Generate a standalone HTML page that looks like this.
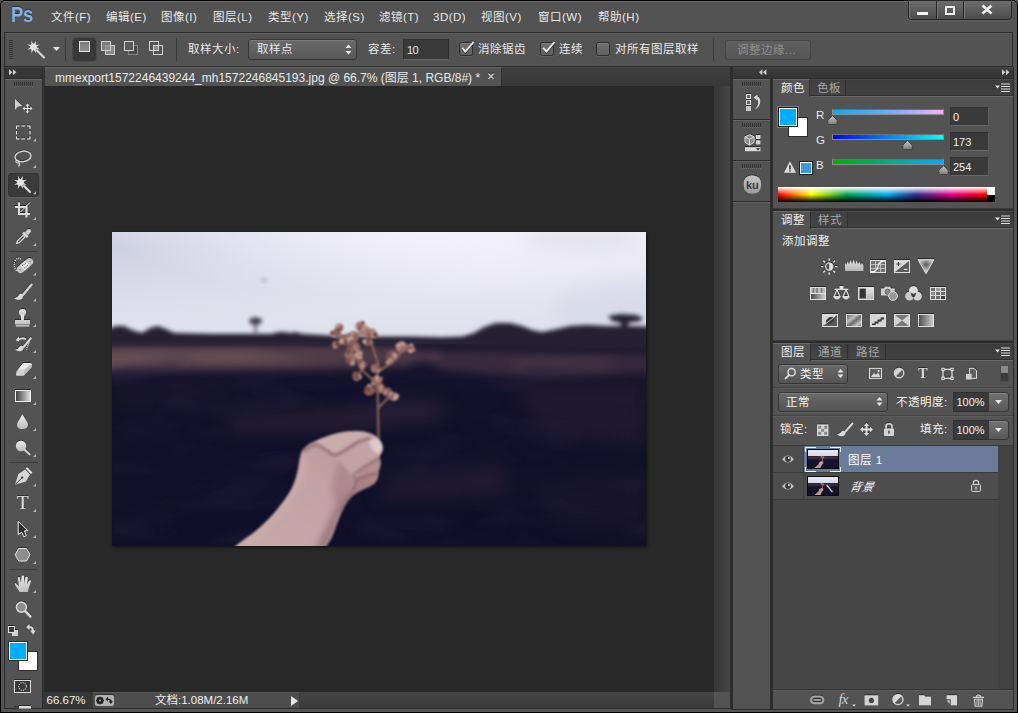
<!DOCTYPE html>
<html lang="zh-CN">
<head>
<meta charset="utf-8">
<title>Photoshop</title>
<style>
html,body{margin:0;padding:0;}
body{width:1018px;height:713px;overflow:hidden;background:#535353;font-family:"Liberation Sans","Noto Sans CJK SC",sans-serif;font-size:12px;color:#e6e6e6;}
#app{position:relative;width:1018px;height:713px;overflow:hidden;background:#565656;}
#app div,#app span,#app svg{position:absolute;box-sizing:border-box;}
.t{white-space:nowrap;line-height:16px;height:16px;color:#e8e8e8;font-size:11.5px;letter-spacing:.5px;margin-top:-.5px;}
.tabrow{background:linear-gradient(#3b3b3b,#424242);border-top:1px solid #4a4a4a;border-bottom:1px solid #303030;}
.tabhl{height:1px;background:#686868;}
.tabA{background:#535353;border-top:1px solid #6a6a6a;border-right:1px solid #303030;}
.tabI{border-right:1px solid #303030;background:linear-gradient(#3f3f3f,#454545);}
.tt{font-size:11.5px;color:#ececec;}
.ti{color:#a8a8a8;}
.sl{width:112px;height:6px;border:1px solid #8e8e8e;border-top-color:#6e6e6e;}
.vb{width:39px;height:19px;background:#3a3a3a;border:1px solid #333;border-bottom-color:#686868;border-right-color:#5c5c5c;}
.vt{font-size:11px;color:#f0f0f0;letter-spacing:0;}
.pgap{width:240px;height:3px;background:#2d2d2d;border-top:1px solid #3c3c3c;}
.sel{border:1px solid #363636;border-radius:3px;background:linear-gradient(#6a6a6a,#545454);box-shadow:inset 0 1px 0 #7c7c7c,0 1px 0 #5e5e5e;}
.hsep{width:240px;height:2px;background:#444;border-bottom:1px solid #5c5c5c;}
.pin{width:36px;height:20px;background:#3a3a3a;border:1px solid #303030;border-right:none;}
.pbtn{width:21px;height:20px;background:linear-gradient(#727272,#585858);border:1px solid #363636;border-radius:0 3px 3px 0;box-shadow:inset 0 1px 0 #848484;}

</style>
</head>
<body>
<div id="app">
<!-- window frame -->
<div style="left:0;top:0;width:1018px;height:713px;background:#000;border-radius:5px 5px 0 0;"></div>
<div style="left:1px;top:1px;width:1016px;height:711px;background:#545454;border-radius:4px 4px 0 0;border-top:1px solid #6c6c6c;"></div>
<!-- menubar -->
<div id="menubar" style="left:2px;top:2px;width:1014px;height:30px;background:#535353;border-radius:3px 3px 0 0;">
  <span style="left:9px;top:0px;font-size:22px;font-weight:bold;color:#82b1e2;line-height:26px;letter-spacing:-0.3px;transform:scale(0.84,1.03);transform-origin:0 50%;text-shadow:0 -1px 0 rgba(20,20,20,.55);">Ps</span>
  <span class="t" style="left:49px;top:7px;">文件(F)</span>
  <span class="t" style="left:104px;top:7px;">编辑(E)</span>
  <span class="t" style="left:159px;top:7px;">图像(I)</span>
  <span class="t" style="left:211px;top:7px;">图层(L)</span>
  <span class="t" style="left:266px;top:7px;">类型(Y)</span>
  <span class="t" style="left:322px;top:7px;">选择(S)</span>
  <span class="t" style="left:377px;top:7px;">滤镜(T)</span>
  <span class="t" style="left:431px;top:7px;">3D(D)</span>
  <span class="t" style="left:479px;top:7px;">视图(V)</span>
  <span class="t" style="left:536px;top:7px;">窗口(W)</span>
  <span class="t" style="left:596px;top:7px;">帮助(H)</span>
</div>
<!-- window buttons -->
<div style="left:908px;top:0;width:104px;height:20px;background:#262626;border-radius:0 0 4px 4px;box-shadow:0 1px 0 #606060;"></div>
<div style="left:909px;top:1px;width:27px;height:18px;background:linear-gradient(#6c6c6c,#4c4c4c);border-radius:0 0 0 3px;box-shadow:inset 1px 0 0 #777;"></div>
<div style="left:937px;top:1px;width:26px;height:18px;background:linear-gradient(#6c6c6c,#4c4c4c);box-shadow:inset 1px 0 0 #777;"></div>
<div style="left:964px;top:1px;width:47px;height:18px;background:linear-gradient(#6c6c6c,#4c4c4c);border-radius:0 0 3px 0;box-shadow:inset 1px 0 0 #777;"></div>
<div style="left:917px;top:12px;width:11px;height:3px;background:#f2f2f2;"></div>
<div style="left:945px;top:6px;width:10px;height:9px;border:2px solid #f2f2f2;"></div>
<svg style="left:981px;top:4px;" width="12" height="11" viewBox="0 0 12 11"><path d="M1.5 1.5 L10.5 9.5 M10.5 1.5 L1.5 9.5" stroke="#f2f2f2" stroke-width="2.6"/></svg>
<!-- options bar -->
<div id="optbar" style="left:4px;top:32px;width:1009px;height:35px;background:#535353;border:1px solid #2c2c2c;box-shadow:inset 0 1px 0 #616161;">
</div>
<svg style="left:9px;top:40px;" width="4" height="20" viewBox="0 0 4 20"><path d="M0 0.5H4M0 2.5H4M0 4.5H4M0 6.5H4M0 8.5H4M0 10.5H4M0 12.5H4M0 14.5H4M0 16.5H4M0 18.5H4" stroke="#373737" stroke-width="1"/></svg>
<!-- magic wand icon (option bar) -->
<svg style="left:26px;top:39px;" width="20" height="20" viewBox="26 39 20 20">
  <path d="M36.2 40.7L35.5 45.1L39.9 44.4L36.3 47.0L39.9 49.6L35.5 48.9L36.2 53.3L33.6 49.7L31.0 53.3L31.7 48.9L27.3 49.6L30.9 47.0L27.3 44.4L31.7 45.1L31.0 40.7L33.6 44.3Z" fill="#e2e2e2"/>
  <circle cx="33.6" cy="47" r="3.2" fill="#e2e2e2"/>
  <path d="M37 50.4 L44 57.4" stroke="#d4d4d4" stroke-width="2.1" stroke-linecap="round"/>
</svg>
<svg style="left:53px;top:47px;" width="7" height="4" viewBox="0 0 7 4"><path d="M0 0H7L3.5 4Z" fill="#e8e8e8"/></svg>
<div style="left:65px;top:38px;width:1px;height:23px;background:#3b3b3b;"></div>
<!-- selection mode buttons -->
<div style="left:73px;top:38px;width:23px;height:23px;background:#383838;border-radius:3px;box-shadow:0 0 0 1px #4a4a4a;"></div>
<div style="left:79px;top:41px;width:11px;height:11px;border:1px solid #e0e0e0;background:linear-gradient(#7a7a7a,#909090);"></div>
<div style="left:105px;top:45px;width:10px;height:10px;border:1px solid #cfcfcf;background:#8a8a8a;"></div>
<div style="left:101px;top:41px;width:10px;height:10px;border:1px solid #cfcfcf;background:rgba(138,138,138,.75);"></div>
<div style="left:128px;top:45px;width:10px;height:10px;border:1px solid #888;background:#494949;"></div>
<div style="left:124px;top:41px;width:10px;height:10px;border:1px solid #cfcfcf;background:#5a5a5a;"></div>
<div style="left:149px;top:41px;width:10px;height:10px;border:1px solid #cfcfcf;"></div>
<div style="left:153px;top:45px;width:10px;height:10px;border:1px solid #cfcfcf;"></div>
<div style="left:154px;top:46px;width:4px;height:4px;background:#8a8a8a;"></div>
<div style="left:176px;top:38px;width:1px;height:23px;background:#3b3b3b;"></div>
<span class="t" style="left:188px;top:41px;">取样大小:</span>
<div style="left:248px;top:39px;width:109px;height:21px;border:1px solid #363636;border-radius:3px;background:linear-gradient(#6b6b6b,#575757);box-shadow:inset 0 1px 0 #7a7a7a;"></div>
<span class="t" style="left:257px;top:41px;">取样点</span>
<svg style="left:345px;top:44px;" width="7" height="11" viewBox="0 0 7 11"><path d="M0.5 4L3.5 0.5L6.5 4ZM0.5 7L3.5 10.5L6.5 7Z" fill="#e8e8e8"/></svg>
<span class="t" style="left:368px;top:41px;">容差:</span>
<div style="left:403px;top:39px;width:46px;height:21px;background:#3a3a3a;border:1px solid #2f2f2f;border-bottom-color:#666;"></div>
<span class="t" style="left:407px;top:42px;font-size:11px;letter-spacing:-.5px;">10</span>
<!-- checkboxes -->
<div style="left:459px;top:42px;width:14px;height:14px;border:1px solid #2d2d2d;border-radius:2.5px;background:linear-gradient(#6f6f6f,#616161);box-shadow:inset 0 1px 0 #7c7c7c,0 1px 0 #606060;"></div>
<svg style="left:459px;top:40px;" width="17" height="17" viewBox="0 0 17 17"><path d="M3.4 8.8L6.6 12.6L14.6 3.2" stroke="#252525" stroke-width="2" fill="none" opacity=".7"/><path d="M3.2 7.8L6.4 11.6L14.6 2" stroke="#ececec" stroke-width="1.9" fill="none"/></svg>
<span class="t" style="left:478px;top:41px;">消除锯齿</span>
<div style="left:540px;top:42px;width:14px;height:14px;border:1px solid #2d2d2d;border-radius:2.5px;background:linear-gradient(#6f6f6f,#616161);box-shadow:inset 0 1px 0 #7c7c7c,0 1px 0 #606060;"></div>
<svg style="left:540px;top:40px;" width="17" height="17" viewBox="0 0 17 17"><path d="M3.4 8.8L6.6 12.6L14.6 3.2" stroke="#252525" stroke-width="2" fill="none" opacity=".7"/><path d="M3.2 7.8L6.4 11.6L14.6 2" stroke="#ececec" stroke-width="1.9" fill="none"/></svg>
<span class="t" style="left:559px;top:41px;">连续</span>
<div style="left:596px;top:42px;width:14px;height:14px;border:1px solid #2d2d2d;border-radius:2.5px;background:linear-gradient(#6f6f6f,#616161);box-shadow:inset 0 1px 0 #7c7c7c,0 1px 0 #606060;"></div>
<span class="t" style="left:615px;top:41px;">对所有图层取样</span>
<div style="left:713px;top:38px;width:1px;height:23px;background:#3b3b3b;"></div>
<div style="left:725px;top:40px;width:86px;height:20px;border:1px solid #444;border-radius:3px;background:linear-gradient(#5f5f5f,#555);"></div>
<span class="t" style="left:737px;top:42px;color:#8f8f8f;">调整边缘...</span>
<!-- document area -->
<div style="left:42px;top:67px;width:690px;height:642px;background:#2d2d2d;"></div>
<div style="left:44px;top:67px;width:686px;height:19px;background:linear-gradient(#3f3f3f,#383838);border-left:1px solid #303030;border-top:1px solid #484848;"></div>
<div style="left:45px;top:67px;width:457px;height:19px;background:#535353;border-top:1px solid #646464;border-right:1px solid #303030;"></div>
<span class="t" style="left:55px;top:70px;color:#eaeaea;font-size:12px;letter-spacing:0;" id="tabtitle">mmexport1572246439244_mh1572246845193.jpg @ 66.7% (图层 1, RGB/8#) *</span>
<svg style="left:487px;top:71px;" width="8" height="9" viewBox="0 0 8 9"><path d="M1.4 1.6L6.6 6.8M6.6 1.6L1.4 6.8" stroke="#1e1e1e" stroke-width="1.5"/><path d="M1.4 2.6L6.6 7.8M6.6 2.6L1.4 7.8" stroke="#cdcdcd" stroke-width="1.4"/></svg>
<div id="canvas" style="left:44px;top:86px;width:670px;height:606px;background:#282828;"></div>
<div style="left:714px;top:86px;width:16px;height:606px;background:linear-gradient(90deg,#363636,#464646);"></div>
<!-- status bar -->
<div style="left:44px;top:692px;width:686px;height:17px;background:linear-gradient(#444,#3a3a3a);border-bottom:1px solid #2c2c2c;"></div>
<div style="left:44px;top:692px;width:49px;height:16px;background:#373737;"></div>
<div style="left:93px;top:692px;width:207px;height:16px;background:#4d4d4d;border-top:1px solid #565656;border-right:1px solid #3a3a3a;"></div>
<div style="left:714px;top:692px;width:16px;height:16px;background:#535353;"></div>
<span class="t" style="left:46.5px;top:692px;font-size:11.5px;letter-spacing:0;color:#f0f0f0;">66.67%</span>
<div style="left:95px;top:695px;width:19px;height:11px;background:#b2b2b2;border-radius:2px;box-shadow:0 -1px 0 #2c2c2c;"></div>
<svg style="left:95px;top:695px;" width="19" height="11" viewBox="0 0 19 11"><circle cx="5" cy="5.5" r="2.6" fill="none" stroke="#222" stroke-width="2"/><path d="M5 1.6V9.4M1.1 5.5H8.9M2.2 2.7L7.8 8.3M7.8 2.7L2.2 8.3" stroke="#222" stroke-width="1.1"/><circle cx="5" cy="5.5" r="1" fill="#b2b2b2"/><path d="M10.6 4.2L13 1.6V3.4Q16.6 3.4 16.6 6.2H18L15.8 9L13.6 6.2H15Q14.8 5 13 5V6.6Z" fill="#222"/></svg>
<span class="t" style="left:155px;top:692.5px;font-size:11.5px;letter-spacing:0;color:#f0f0f0;">文档:1.08M/2.16M</span>
<svg style="left:291px;top:696px;" width="7" height="10" viewBox="0 0 7 10"><path d="M0 0L7 5L0 10Z" fill="#e6e6e6"/></svg>
<!-- photo -->
<div style="left:112px;top:232px;width:534px;height:314px;box-shadow:1px 1px 3px rgba(0,0,0,.6);background:#100f29;"></div>
<svg id="photo" style="left:112px;top:232px;" width="534" height="314" viewBox="0 0 534 314">
  <defs>
    <linearGradient id="sky" x1="0" y1="0" x2="0" y2="1">
      <stop offset="0" stop-color="#ecebf5"/>
      <stop offset="0.5" stop-color="#e6e6f1"/>
      <stop offset="1" stop-color="#dddfec"/>
    </linearGradient>
    <radialGradient id="skyl" cx="0.0" cy="0.15" r="0.7">
      <stop offset="0" stop-color="#cbcee0" stop-opacity=".9"/>
      <stop offset="1" stop-color="#cbcee0" stop-opacity="0"/>
    </radialGradient>
    <radialGradient id="skyr" cx="0.6" cy="0.0" r="0.6">
      <stop offset="0" stop-color="#f3f1fd" stop-opacity=".95"/>
      <stop offset="1" stop-color="#f3f1fd" stop-opacity="0"/>
    </radialGradient>
    <linearGradient id="field" x1="0" y1="0" x2="0" y2="1">
      <stop offset="0" stop-color="#1a1630"/>
      <stop offset="0.25" stop-color="#12112b"/>
      <stop offset="1" stop-color="#0f0f29"/>
    </linearGradient>
    <linearGradient id="skin" x1="0" y1="1" x2="1" y2="0">
      <stop offset="0" stop-color="#c9aaa9"/>
      <stop offset="0.55" stop-color="#c3a2a3"/>
      <stop offset="1" stop-color="#b9979a"/>
    </linearGradient>
    <filter id="b1" color-interpolation-filters="sRGB" x="-20%" y="-20%" width="140%" height="140%"><feGaussianBlur stdDeviation="1.2"/></filter>
    <filter id="b3" color-interpolation-filters="sRGB" x="-20%" y="-80%" width="140%" height="260%"><feGaussianBlur stdDeviation="3"/></filter>
    <filter id="b5" color-interpolation-filters="sRGB" x="-20%" y="-100%" width="140%" height="300%"><feGaussianBlur stdDeviation="5"/></filter>
    <filter id="b9" color-interpolation-filters="sRGB" x="-40%" y="-150%" width="180%" height="400%"><feGaussianBlur stdDeviation="9"/></filter>
    <filter id="b05" color-interpolation-filters="sRGB" x="-10%" y="-10%" width="120%" height="120%"><feGaussianBlur stdDeviation="0.9"/></filter>
    <filter id="b07" color-interpolation-filters="sRGB" x="-10%" y="-10%" width="120%" height="120%"><feGaussianBlur stdDeviation="0.8"/></filter>
    <filter id="b2h" color-interpolation-filters="sRGB" x="-20%" y="-20%" width="140%" height="140%"><feGaussianBlur stdDeviation="2.2"/></filter>
    <filter id="tex" x="0" y="0" width="100%" height="100%" color-interpolation-filters="sRGB">
      <feTurbulence type="fractalNoise" baseFrequency="0.011 0.032" numOctaves="4" seed="11" result="n"/>
      <feColorMatrix in="n" type="matrix" values="0 0 0 0 0.16  0 0 0 0 0.13  0 0 0 0 0.25  1.4 0 0 0 -0.72"/>
      <feGaussianBlur stdDeviation="1.5"/>
    </filter>
    <filter id="tex2" x="0" y="0" width="100%" height="100%" color-interpolation-filters="sRGB">
      <feTurbulence type="fractalNoise" baseFrequency="0.02 0.09" numOctaves="3" seed="4" result="n"/>
      <feColorMatrix in="n" type="matrix" values="0 0 0 0 0.16  0 0 0 0 0.12  0 0 0 0 0.2  2.6 0 0 0 -1.0"/>
      <feGaussianBlur stdDeviation="1.2"/>
    </filter>
    <linearGradient id="fade" x1="0" y1="0" x2="0" y2="1"><stop offset="0" stop-color="#fff" stop-opacity="0"/><stop offset=".12" stop-color="#fff" stop-opacity="1"/><stop offset="1" stop-color="#fff" stop-opacity="0.8"/></linearGradient>
    <mask id="fm"><rect x="0" y="112" width="534" height="202" fill="url(#fade)"/></mask>
    <clipPath id="pc"><rect x="0" y="0" width="534" height="314"/></clipPath>
    <clipPath id="hc"><path d="M119.8 319.3C120.4 318.4 119.2 317.5 123.5 313.9C127.7 310.2 138.7 303.2 145.4 297.4C152.1 291.7 158.1 285.6 163.6 279.2C169.1 272.8 174.7 265.2 178.2 259.1C181.7 253.1 182.9 248.5 184.6 242.7C186.3 236.9 187.2 228.6 188.2 224.5C189.2 220.4 189.2 220.1 190.6 218.1C192.0 216.1 193.9 214.3 196.4 212.6C198.9 211.0 201.6 209.7 205.6 208.1C209.5 206.4 215.3 204.0 220.2 202.6C225.0 201.2 229.9 200.0 234.7 199.5C239.6 198.9 244.8 198.7 249.3 199.3C253.9 199.9 258.8 201.3 262.1 203.0C265.4 204.7 267.6 207.2 269.0 209.5C270.5 211.9 271.0 214.7 270.9 217.2C270.7 219.7 268.3 222.1 267.9 224.5C267.6 226.9 268.9 229.3 268.7 231.8C268.5 234.2 267.3 236.9 266.9 239.1C266.4 241.3 266.9 242.8 266.1 244.9C265.3 247.0 264.3 249.9 262.1 251.8C259.9 253.8 256.0 255.0 253.0 256.6C249.9 258.2 246.6 259.4 243.9 261.3C241.1 263.3 238.7 265.6 236.6 268.3C234.4 270.9 232.9 273.7 231.1 277.4C229.3 281.0 227.4 285.6 225.6 290.2C223.8 294.7 222.0 300.8 220.2 304.7C218.3 308.7 216.0 311.4 214.7 313.9C213.3 316.3 212.4 318.4 211.9 319.3Z"/></clipPath>
  </defs>
  <g clip-path="url(#pc)">
    <rect x="0" y="0" width="534" height="314" fill="url(#field)"/>
    <rect x="0" y="0" width="534" height="112" fill="url(#sky)"/>
    <rect x="0" y="0" width="534" height="112" fill="url(#skyl)"/>
    <rect x="0" y="0" width="534" height="112" fill="url(#skyr)"/>
    <ellipse cx="470" cy="8" rx="60" ry="11" fill="#d9d9e4" opacity=".6" filter="url(#b9)"/>
    <ellipse cx="520" cy="80" rx="80" ry="30" fill="#d3d6e6" opacity=".6" filter="url(#b9)"/>
    <!-- field base -->
    <rect x="-20" y="108" width="574" height="230" fill="url(#field)" filter="url(#b3)"/>
    <!-- dry grass band -->
    <g filter="url(#b5)" opacity=".95">
      <path d="M-20 112 L120 112 L230 112 L300 114 L300 133 L200 137 L90 138 L-20 140 Z" fill="#56404c"/>
      <path d="M300 118 L420 120 L560 122 L560 140 L430 146 L330 138 Z" fill="#3b2d3d"/>
      <path d="M-10 119 L150 118 L190 130 L-10 137 Z" fill="#6a5054"/>
      <path d="M200 120 L330 119 L330 129 L200 131 Z" fill="#523d4a"/>
      <path d="M400 128 L500 126 L500 138 L400 140 Z" fill="#4a3844"/>
    </g>
    <g filter="url(#b9)">
      <path d="M110 186 L260 176 L330 168 L330 186 L250 196 L120 200 Z" fill="#33263a" opacity=".7"/>
      <path d="M270 250 L390 232 L400 262 L270 268 Z" fill="#241c33" opacity=".9"/>
      <path d="M400 150 L534 150 L534 215 L430 200 Z" fill="#231b32" opacity=".8"/>
      <path d="M0 150 L120 150 L120 170 L0 175 Z" fill="#1c1730" opacity=".7"/>
      <path d="M420 250 L534 240 L534 300 L440 290 Z" fill="#1c172f" opacity=".7"/>
    </g>
    <g mask="url(#fm)"><rect x="0" y="112" width="534" height="202" filter="url(#tex)"/></g>
    <!-- treeline -->
    <g filter="url(#b2h)" fill="#262033">
      <path d="M-20 101 L-6 98 L4 94 L12 94 L20 98 L30 101 L38 96 L46 94 L54 97 L62 101 L100 102 L140 102 L160 102 L166 100 L172 100 L178 101 L184 100 L190 102 L220 104 L260 105 L300 105 L330 106 L350 105 L362 101 L372 95 L384 91 L398 91 L410 94 L420 98 L430 100 L445 97 L458 94 L475 93 L495 94 L515 94 L560 95 L560 118 L300 113 L-20 113 Z"/>
      <path d="M496 84 L508 82 L524 83 L531 86 L528 89 L516 91 L516 100 L508 100 L509 91 L500 89 Z"/>
    </g>
    <g filter="url(#b2h)" fill="#3b3446">
      <ellipse cx="143.5" cy="89" rx="6.5" ry="3.6"/>
      <rect x="142.6" y="90" width="2" height="12"/>
    </g>
    <ellipse cx="152" cy="48" rx="3.5" ry="2.6" fill="#b9b8c8" filter="url(#b2h)"/>
    <!-- stem + flower -->
    <g filter="url(#b05)">
      <g fill="none" stroke="#8c6258" stroke-width="2.2" stroke-linecap="round">
        <path d="M266.5 206 L266 176 L265.5 152"/>
        <path d="M266 176 L275 167 L281 163"/>
        <path d="M265.5 152 L250 138 L244 124 L240 112"/>
        <path d="M265.5 152 L266 131 L260 113 L256 100"/>
        <path d="M266 140 L284 127 L292 116"/>
        <path d="M250 138 L244 144"/>
      </g>
      <circle cx="227.2" cy="95.7" r="4.1" fill="#8e665e"/>
      <circle cx="226.5" cy="96.9" r="2.3" fill="#9c7068"/>
      <circle cx="227.8" cy="94.6" r="2.2" fill="#ba968c"/>
      <circle cx="229.4" cy="96.2" r="1.6" fill="#9c7068"/>
      <circle cx="226.1" cy="95.3" r="2.2" fill="#ba968c"/>
      <circle cx="225.4" cy="93.8" r="1.6" fill="#c0a096"/>
      <circle cx="228.8" cy="96.2" r="2.2" fill="#8a5f58"/>
      <circle cx="226.8" cy="97.0" r="1.6" fill="#764e4a"/>
      <circle cx="224.4" cy="101.7" r="4.8" fill="#8e665e"/>
      <circle cx="221.1" cy="100.5" r="1.6" fill="#ba968c"/>
      <circle cx="222.3" cy="103.8" r="1.6" fill="#b08a80"/>
      <circle cx="222.3" cy="99.8" r="2.1" fill="#a67c72"/>
      <circle cx="220.2" cy="102.6" r="1.9" fill="#ba968c"/>
      <circle cx="225.4" cy="98.4" r="1.8" fill="#764e4a"/>
      <circle cx="220.3" cy="101.1" r="2.4" fill="#764e4a"/>
      <circle cx="223.3" cy="100.8" r="2.1" fill="#8a5f58"/>
      <circle cx="223.5" cy="112.7" r="3.6" fill="#8e665e"/>
      <circle cx="223.6" cy="111.5" r="2.1" fill="#b08a80"/>
      <circle cx="224.6" cy="112.5" r="2.2" fill="#a67c72"/>
      <circle cx="222.5" cy="114.1" r="2.1" fill="#6a4440"/>
      <circle cx="224.5" cy="113.2" r="1.8" fill="#9c7068"/>
      <circle cx="226.0" cy="113.7" r="2.3" fill="#6a4440"/>
      <circle cx="223.1" cy="114.4" r="2.3" fill="#b08a80"/>
      <circle cx="225.2" cy="112.1" r="2.2" fill="#6a4440"/>
      <circle cx="232.6" cy="108.1" r="5.3" fill="#8e665e"/>
      <circle cx="236.5" cy="109.5" r="1.7" fill="#ba968c"/>
      <circle cx="228.8" cy="110.8" r="2.1" fill="#8a5f58"/>
      <circle cx="229.4" cy="109.1" r="2.6" fill="#c0a096"/>
      <circle cx="234.2" cy="106.4" r="2.0" fill="#a67c72"/>
      <circle cx="231.5" cy="105.7" r="1.8" fill="#9c7068"/>
      <circle cx="233.6" cy="110.0" r="1.8" fill="#6a4440"/>
      <circle cx="233.6" cy="106.4" r="1.8" fill="#8a5f58"/>
      <circle cx="241.7" cy="104.5" r="5.5" fill="#8e665e"/>
      <circle cx="239.2" cy="105.8" r="2.2" fill="#8a5f58"/>
      <circle cx="240.5" cy="101.5" r="2.2" fill="#b08a80"/>
      <circle cx="237.1" cy="105.7" r="2.6" fill="#c0a096"/>
      <circle cx="239.4" cy="106.2" r="2.1" fill="#c0a096"/>
      <circle cx="243.2" cy="105.1" r="1.8" fill="#8a5f58"/>
      <circle cx="244.6" cy="106.8" r="1.6" fill="#8a5f58"/>
      <circle cx="236.7" cy="103.4" r="2.2" fill="#9c7068"/>
      <circle cx="248.1" cy="94.4" r="4.6" fill="#8e665e"/>
      <circle cx="250.3" cy="92.3" r="1.7" fill="#764e4a"/>
      <circle cx="251.1" cy="93.6" r="2.1" fill="#9c7068"/>
      <circle cx="250.6" cy="91.0" r="2.1" fill="#6a4440"/>
      <circle cx="247.5" cy="95.8" r="2.4" fill="#764e4a"/>
      <circle cx="244.8" cy="94.8" r="2.1" fill="#ba968c"/>
      <circle cx="250.8" cy="93.6" r="1.7" fill="#b08a80"/>
      <circle cx="248.2" cy="92.4" r="2.3" fill="#9c7068"/>
      <circle cx="253.6" cy="99.9" r="5.0" fill="#8e665e"/>
      <circle cx="252.9" cy="97.9" r="1.9" fill="#8a5f58"/>
      <circle cx="252.3" cy="101.4" r="2.1" fill="#a67c72"/>
      <circle cx="251.3" cy="97.4" r="2.4" fill="#ba968c"/>
      <circle cx="255.0" cy="96.2" r="2.4" fill="#ba968c"/>
      <circle cx="254.5" cy="102.6" r="2.4" fill="#b08a80"/>
      <circle cx="254.3" cy="97.2" r="1.7" fill="#a67c72"/>
      <circle cx="249.2" cy="101.3" r="2.7" fill="#a67c72"/>
      <circle cx="260.0" cy="100.8" r="4.3" fill="#8e665e"/>
      <circle cx="261.2" cy="101.4" r="2.1" fill="#a67c72"/>
      <circle cx="260.8" cy="103.5" r="2.6" fill="#b08a80"/>
      <circle cx="256.9" cy="101.2" r="2.5" fill="#9c7068"/>
      <circle cx="260.7" cy="99.6" r="2.0" fill="#ba968c"/>
      <circle cx="258.4" cy="101.0" r="2.4" fill="#a67c72"/>
      <circle cx="263.4" cy="102.8" r="2.4" fill="#6a4440"/>
      <circle cx="256.8" cy="103.0" r="2.4" fill="#8a5f58"/>
      <circle cx="255.8" cy="109.9" r="4.1" fill="#8e665e"/>
      <circle cx="256.9" cy="109.9" r="2.2" fill="#6a4440"/>
      <circle cx="256.3" cy="108.6" r="2.5" fill="#6a4440"/>
      <circle cx="254.7" cy="108.3" r="2.2" fill="#8a5f58"/>
      <circle cx="259.1" cy="110.3" r="2.4" fill="#9c7068"/>
      <circle cx="252.1" cy="109.3" r="2.0" fill="#ba968c"/>
      <circle cx="256.6" cy="108.5" r="1.8" fill="#764e4a"/>
      <circle cx="252.6" cy="109.9" r="1.9" fill="#c0a096"/>
      <circle cx="241.7" cy="115.4" r="6.7" fill="#8e665e"/>
      <circle cx="242.7" cy="113.8" r="2.4" fill="#6a4440"/>
      <circle cx="238.8" cy="110.9" r="2.1" fill="#8a5f58"/>
      <circle cx="237.6" cy="114.6" r="1.5" fill="#6a4440"/>
      <circle cx="242.5" cy="111.1" r="2.4" fill="#8a5f58"/>
      <circle cx="243.5" cy="118.7" r="2.4" fill="#b08a80"/>
      <circle cx="239.8" cy="118.9" r="2.2" fill="#9c7068"/>
      <circle cx="243.1" cy="114.2" r="1.7" fill="#b08a80"/>
      <circle cx="238.1" cy="121.8" r="5.0" fill="#8e665e"/>
      <circle cx="238.5" cy="118.9" r="2.2" fill="#9c7068"/>
      <circle cx="234.9" cy="122.9" r="2.1" fill="#ba968c"/>
      <circle cx="237.1" cy="119.2" r="2.1" fill="#6a4440"/>
      <circle cx="236.0" cy="121.7" r="2.1" fill="#764e4a"/>
      <circle cx="242.0" cy="119.8" r="1.7" fill="#6a4440"/>
      <circle cx="239.2" cy="123.0" r="2.0" fill="#9c7068"/>
      <circle cx="236.8" cy="119.5" r="1.8" fill="#764e4a"/>
      <circle cx="238.1" cy="128.2" r="4.1" fill="#8e665e"/>
      <circle cx="238.9" cy="124.8" r="1.7" fill="#a67c72"/>
      <circle cx="240.3" cy="130.9" r="2.7" fill="#ba968c"/>
      <circle cx="238.1" cy="127.0" r="2.6" fill="#8a5f58"/>
      <circle cx="241.5" cy="128.0" r="1.7" fill="#c0a096"/>
      <circle cx="240.3" cy="128.1" r="2.0" fill="#a67c72"/>
      <circle cx="236.8" cy="130.9" r="1.5" fill="#6a4440"/>
      <circle cx="237.1" cy="128.6" r="1.9" fill="#764e4a"/>
      <circle cx="246.3" cy="123.6" r="4.1" fill="#8e665e"/>
      <circle cx="245.1" cy="123.5" r="2.7" fill="#ba968c"/>
      <circle cx="247.6" cy="123.4" r="1.8" fill="#b08a80"/>
      <circle cx="247.6" cy="122.8" r="2.4" fill="#c0a096"/>
      <circle cx="248.0" cy="121.3" r="2.6" fill="#c0a096"/>
      <circle cx="248.5" cy="126.4" r="2.2" fill="#a67c72"/>
      <circle cx="247.3" cy="124.2" r="2.3" fill="#c0a096"/>
      <circle cx="247.7" cy="122.6" r="1.5" fill="#9c7068"/>
      <circle cx="250.0" cy="133.6" r="3.8" fill="#8e665e"/>
      <circle cx="250.4" cy="132.5" r="2.5" fill="#9c7068"/>
      <circle cx="249.9" cy="134.8" r="1.5" fill="#c0a096"/>
      <circle cx="251.5" cy="132.9" r="1.7" fill="#ba968c"/>
      <circle cx="253.3" cy="132.3" r="1.8" fill="#8a5f58"/>
      <circle cx="250.5" cy="135.2" r="1.9" fill="#ba968c"/>
      <circle cx="249.4" cy="135.7" r="1.7" fill="#a67c72"/>
      <circle cx="251.2" cy="130.3" r="1.5" fill="#b08a80"/>
      <circle cx="244.5" cy="144.6" r="4.1" fill="#8e665e"/>
      <circle cx="244.2" cy="142.1" r="1.7" fill="#6a4440"/>
      <circle cx="244.6" cy="146.8" r="2.3" fill="#c0a096"/>
      <circle cx="243.1" cy="142.5" r="2.6" fill="#764e4a"/>
      <circle cx="243.0" cy="141.2" r="1.9" fill="#8a5f58"/>
      <circle cx="242.8" cy="145.7" r="1.6" fill="#8a5f58"/>
      <circle cx="247.3" cy="144.8" r="2.6" fill="#c0a096"/>
      <circle cx="245.2" cy="145.6" r="2.5" fill="#764e4a"/>
      <circle cx="263.6" cy="136.4" r="5.0" fill="#8e665e"/>
      <circle cx="260.6" cy="134.3" r="1.6" fill="#8a5f58"/>
      <circle cx="265.2" cy="138.7" r="1.8" fill="#a67c72"/>
      <circle cx="266.8" cy="135.9" r="1.8" fill="#764e4a"/>
      <circle cx="264.0" cy="138.2" r="1.9" fill="#9c7068"/>
      <circle cx="260.6" cy="136.9" r="1.7" fill="#b08a80"/>
      <circle cx="267.1" cy="138.5" r="1.7" fill="#b08a80"/>
      <circle cx="261.8" cy="137.8" r="2.3" fill="#9c7068"/>
      <circle cx="289.2" cy="115.4" r="5.8" fill="#8e665e"/>
      <circle cx="286.1" cy="113.6" r="2.4" fill="#c0a096"/>
      <circle cx="289.6" cy="111.3" r="2.1" fill="#764e4a"/>
      <circle cx="288.5" cy="111.6" r="1.6" fill="#c0a096"/>
      <circle cx="288.7" cy="110.9" r="1.7" fill="#b08a80"/>
      <circle cx="291.0" cy="112.2" r="2.6" fill="#ba968c"/>
      <circle cx="290.6" cy="116.2" r="2.3" fill="#9c7068"/>
      <circle cx="286.9" cy="117.6" r="1.6" fill="#b08a80"/>
      <circle cx="298.3" cy="116.3" r="4.3" fill="#8e665e"/>
      <circle cx="296.1" cy="114.2" r="2.1" fill="#b08a80"/>
      <circle cx="297.1" cy="116.6" r="2.6" fill="#9c7068"/>
      <circle cx="297.6" cy="115.3" r="2.4" fill="#764e4a"/>
      <circle cx="299.6" cy="113.1" r="1.8" fill="#ba968c"/>
      <circle cx="298.7" cy="119.2" r="2.1" fill="#c0a096"/>
      <circle cx="301.7" cy="118.0" r="1.8" fill="#b08a80"/>
      <circle cx="296.0" cy="114.4" r="1.6" fill="#8a5f58"/>
      <circle cx="280.0" cy="123.6" r="5.3" fill="#8e665e"/>
      <circle cx="278.2" cy="126.7" r="2.3" fill="#8a5f58"/>
      <circle cx="281.5" cy="123.7" r="1.8" fill="#9c7068"/>
      <circle cx="278.6" cy="120.2" r="1.8" fill="#764e4a"/>
      <circle cx="277.0" cy="124.2" r="1.6" fill="#ba968c"/>
      <circle cx="279.4" cy="125.0" r="2.1" fill="#764e4a"/>
      <circle cx="275.8" cy="124.7" r="2.7" fill="#6a4440"/>
      <circle cx="282.8" cy="123.5" r="2.6" fill="#ba968c"/>
      <circle cx="278.2" cy="129.0" r="3.8" fill="#8e665e"/>
      <circle cx="279.3" cy="129.5" r="2.4" fill="#764e4a"/>
      <circle cx="279.5" cy="128.6" r="2.5" fill="#764e4a"/>
      <circle cx="280.4" cy="127.2" r="1.8" fill="#6a4440"/>
      <circle cx="277.1" cy="129.8" r="2.6" fill="#6a4440"/>
      <circle cx="275.8" cy="130.6" r="2.0" fill="#c0a096"/>
      <circle cx="276.9" cy="131.8" r="1.5" fill="#a67c72"/>
      <circle cx="278.9" cy="128.0" r="2.6" fill="#b08a80"/>
      <circle cx="264.5" cy="149.1" r="5.5" fill="#8e665e"/>
      <circle cx="266.5" cy="147.7" r="1.9" fill="#c0a096"/>
      <circle cx="260.8" cy="152.0" r="1.6" fill="#c0a096"/>
      <circle cx="264.7" cy="144.6" r="1.8" fill="#b08a80"/>
      <circle cx="265.8" cy="147.1" r="2.6" fill="#ba968c"/>
      <circle cx="267.5" cy="148.6" r="1.9" fill="#a67c72"/>
      <circle cx="265.2" cy="146.3" r="1.5" fill="#c0a096"/>
      <circle cx="268.8" cy="146.6" r="2.2" fill="#9c7068"/>
      <circle cx="257.3" cy="158.3" r="5.3" fill="#8e665e"/>
      <circle cx="261.2" cy="159.5" r="2.0" fill="#8a5f58"/>
      <circle cx="255.8" cy="156.5" r="1.6" fill="#8a5f58"/>
      <circle cx="258.7" cy="160.7" r="1.8" fill="#764e4a"/>
      <circle cx="257.0" cy="153.6" r="1.8" fill="#ba968c"/>
      <circle cx="256.2" cy="161.4" r="2.0" fill="#8a5f58"/>
      <circle cx="256.3" cy="157.1" r="2.1" fill="#6a4440"/>
      <circle cx="254.4" cy="157.4" r="1.9" fill="#6a4440"/>
      <circle cx="268.2" cy="156.4" r="5.0" fill="#8e665e"/>
      <circle cx="265.3" cy="157.7" r="1.8" fill="#8a5f58"/>
      <circle cx="267.3" cy="157.7" r="1.8" fill="#764e4a"/>
      <circle cx="268.9" cy="154.6" r="1.5" fill="#c0a096"/>
      <circle cx="265.3" cy="158.9" r="1.8" fill="#764e4a"/>
      <circle cx="267.4" cy="157.6" r="1.8" fill="#a67c72"/>
      <circle cx="270.3" cy="158.5" r="2.3" fill="#ba968c"/>
      <circle cx="271.9" cy="158.7" r="2.0" fill="#6a4440"/>
      <circle cx="275.5" cy="160.0" r="4.6" fill="#8e665e"/>
      <circle cx="273.5" cy="160.8" r="2.5" fill="#b08a80"/>
      <circle cx="277.3" cy="161.7" r="2.4" fill="#6a4440"/>
      <circle cx="278.2" cy="159.5" r="1.6" fill="#6a4440"/>
      <circle cx="277.4" cy="159.7" r="1.6" fill="#8a5f58"/>
      <circle cx="278.0" cy="163.3" r="1.6" fill="#6a4440"/>
      <circle cx="278.6" cy="161.8" r="1.5" fill="#8a5f58"/>
      <circle cx="275.9" cy="163.9" r="2.3" fill="#764e4a"/>
      <circle cx="281.9" cy="164.6" r="4.6" fill="#8e665e"/>
      <circle cx="285.0" cy="163.9" r="2.1" fill="#c0a096"/>
      <circle cx="281.4" cy="163.2" r="1.6" fill="#ba968c"/>
      <circle cx="280.5" cy="165.7" r="2.2" fill="#b08a80"/>
      <circle cx="277.7" cy="163.6" r="1.8" fill="#a67c72"/>
      <circle cx="279.4" cy="161.6" r="2.1" fill="#ba968c"/>
      <circle cx="280.7" cy="164.3" r="2.0" fill="#764e4a"/>
      <circle cx="283.6" cy="165.2" r="2.6" fill="#c0a096"/>
    </g>
    <!-- hand -->
    <g filter="url(#b07)">
      <path d="M119.8 319.3C120.4 318.4 119.2 317.5 123.5 313.9C127.7 310.2 138.7 303.2 145.4 297.4C152.1 291.7 158.1 285.6 163.6 279.2C169.1 272.8 174.7 265.2 178.2 259.1C181.7 253.1 182.9 248.5 184.6 242.7C186.3 236.9 187.2 228.6 188.2 224.5C189.2 220.4 189.2 220.1 190.6 218.1C192.0 216.1 193.9 214.3 196.4 212.6C198.9 211.0 201.6 209.7 205.6 208.1C209.5 206.4 215.3 204.0 220.2 202.6C225.0 201.2 229.9 200.0 234.7 199.5C239.6 198.9 244.8 198.7 249.3 199.3C253.9 199.9 258.8 201.3 262.1 203.0C265.4 204.7 267.6 207.2 269.0 209.5C270.5 211.9 271.0 214.7 270.9 217.2C270.7 219.7 268.3 222.1 267.9 224.5C267.6 226.9 268.9 229.3 268.7 231.8C268.5 234.2 267.3 236.9 266.9 239.1C266.4 241.3 266.9 242.8 266.1 244.9C265.3 247.0 264.3 249.9 262.1 251.8C259.9 253.8 256.0 255.0 253.0 256.6C249.9 258.2 246.6 259.4 243.9 261.3C241.1 263.3 238.7 265.6 236.6 268.3C234.4 270.9 232.9 273.7 231.1 277.4C229.3 281.0 227.4 285.6 225.6 290.2C223.8 294.7 222.0 300.8 220.2 304.7C218.3 308.7 216.0 311.4 214.7 313.9C213.3 316.3 212.4 318.4 211.9 319.3Z" fill="url(#skin)"/>
      <g clip-path="url(#hc)">
        <g filter="url(#b3)">
          <path d="M243.9 261.0C244.8 261.6 238.7 265.5 236.6 268.3C234.4 271.0 232.9 273.7 231.1 277.4C229.3 281.0 227.4 285.6 225.6 290.2C223.8 294.7 222.1 299.9 220.2 304.7C218.2 309.6 216.5 316.9 213.8 319.3C211.0 321.8 203.9 323.0 203.7 319.3C203.6 315.7 209.8 304.1 212.9 297.4C215.9 290.8 218.9 284.7 222.0 279.2C225.0 273.7 227.4 267.7 231.1 264.6C234.7 261.6 243.0 260.4 243.9 261.0Z" fill="#8c6a70" opacity=".75"/>
          <path d="M123.5 313.9C125.0 311.1 138.7 303.2 145.4 297.4C152.1 291.7 158.1 285.6 163.6 279.2C169.1 272.8 174.7 265.2 178.2 259.1C181.7 253.1 182.9 248.5 184.6 242.7C186.3 236.9 186.6 226.9 188.2 224.5C189.9 222.1 194.2 224.2 194.6 228.1C195.1 232.1 193.7 241.2 191.0 248.2C188.2 255.2 183.4 263.1 178.2 270.1C173.0 277.1 166.9 282.9 160.0 290.2C153.0 297.4 142.3 309.9 136.2 313.9C130.2 317.8 122.0 316.6 123.5 313.9Z" fill="#d2b6b5" opacity=".45"/>
          <path d="M227.4 230.0C230.8 227.5 237.5 237.6 240.2 242.7C243.0 247.9 244.8 256.4 243.9 261.0C243.0 265.5 237.8 268.0 234.7 270.1C231.7 272.2 228.1 275.9 225.6 273.7C223.2 271.6 219.8 264.6 220.2 257.3C220.5 250.0 224.1 232.4 227.4 230.0Z" fill="#a07c80" opacity=".6"/>
        </g>
        <g filter="url(#b1)">
          <path d="M245.7 240.0C246.9 238.0 249.9 236.6 253.0 234.5C256.0 232.4 261.4 228.2 263.9 227.2C266.5 226.2 267.5 227.4 268.3 228.5C269.1 229.6 268.9 231.8 268.7 233.6C268.4 235.4 268.2 237.9 266.9 239.4C265.5 241.0 262.9 241.6 260.3 242.7C257.7 243.9 253.6 245.8 251.2 246.4C248.7 247.0 246.6 247.4 245.7 246.4C244.8 245.3 244.5 242.0 245.7 240.0Z" fill="#b48e8f"/>
          <path d="M243.9 248.2C245.8 246.1 249.6 245.7 253.0 244.5C256.3 243.4 261.7 241.2 263.9 241.3C266.1 241.3 266.4 243.2 266.1 244.9C265.8 246.7 264.3 249.9 262.1 251.8C259.9 253.8 256.0 255.0 253.0 256.6C249.9 258.2 245.8 261.2 243.9 261.3C241.9 261.5 241.1 259.5 241.1 257.3C241.1 255.1 241.9 250.3 243.9 248.2Z" fill="#a98385"/>
          <path d="M203.7 208.4C205.6 206.3 215.0 204.1 220.2 202.6C225.3 201.1 229.9 200.0 234.7 199.5C239.6 198.9 244.8 198.7 249.3 199.3C253.9 199.9 259.7 202.0 262.1 203.0C264.5 204.0 265.5 204.8 263.9 205.3C262.4 205.9 256.6 205.3 253.0 206.2C249.3 207.2 245.7 209.0 242.0 210.8C238.4 212.6 234.3 215.2 231.1 217.2C227.9 219.2 225.2 221.9 222.9 222.7C220.6 223.4 219.7 223.0 217.4 221.7C215.1 220.5 211.5 217.6 209.2 215.4C206.9 213.1 201.9 210.6 203.7 208.4Z" fill="#c9acac"/>
          <path d="M222.9 223.0C223.5 221.2 227.9 219.2 231.1 217.2C234.3 215.2 238.4 212.7 242.0 211.0C245.7 209.2 249.3 207.6 253.0 206.6C256.6 205.6 261.3 204.7 263.9 205.1C266.6 205.6 267.9 207.5 269.0 209.5C270.2 211.5 271.0 214.7 270.9 217.2C270.7 219.7 269.7 222.4 267.9 224.5C266.2 226.6 263.1 228.2 260.3 230.0C257.5 231.7 253.9 233.2 251.2 235.1C248.4 236.9 245.7 239.6 243.9 240.9C242.0 242.2 241.7 243.3 240.2 242.7C238.7 242.1 236.9 239.7 234.7 237.3C232.6 234.8 229.4 230.5 227.4 228.1C225.5 225.8 222.3 224.8 222.9 223.0Z" fill="#c2a2a4"/>
          <path d="M257.0 209.5C257.6 207.7 261.9 206.0 263.9 206.2C266.0 206.5 268.3 209.0 269.4 210.8C270.5 212.6 271.0 215.4 270.5 217.2C270.0 219.0 268.4 221.7 266.7 221.7C265.0 221.7 261.9 219.2 260.3 217.2C258.7 215.1 256.4 211.3 257.0 209.5Z" fill="#decacd"/>
          <path d="M191.0 219.0C193.1 217.9 200.1 212.9 203.7 212.6C207.4 212.3 209.7 215.5 212.9 217.2C216.0 218.9 219.2 223.0 222.9 223.0C226.5 223.0 230.9 219.3 234.7 217.2C238.5 215.1 241.7 212.1 245.7 210.3C249.6 208.4 256.3 206.6 258.5 205.9" stroke="#7d595e" stroke-width="2.4" fill="none" opacity=".85"/>
          <path d="M240.6 242.7C241.1 243.6 243.6 245.8 243.9 248.2C244.1 250.6 243.6 254.0 242.0 257.3C240.5 260.7 237.2 264.6 234.7 268.3C232.3 271.9 228.7 277.4 227.4 279.2" stroke="#84606a" stroke-width="2.6" fill="none" opacity=".7"/>
          <path d="M244.8 247.3C246.5 246.7 251.3 244.7 254.8 243.6C258.4 242.6 264.2 241.4 266.1 240.9" stroke="#7a565c" stroke-width="1.8" fill="none" opacity=".8"/>
          <path d="M242.0 241.8C243.9 240.6 248.7 237.3 253.0 234.5C257.3 231.8 265.5 226.9 267.9 225.4" stroke="#7a565c" stroke-width="1.8" fill="none" opacity=".8"/>
        </g>
      </g>
    </g>
  </g>
</svg>
<!-- toolbox -->
<div style="left:4px;top:67px;width:40px;height:642px;background:#3a3a3a;border-right:1px solid #3a3a3a;"></div><div style="left:42px;top:67px;width:1px;height:642px;background:#2b2b2b;"></div>
<div style="left:4px;top:67px;width:38px;height:642px;background:#535353;border-left:1px solid #2c2c2c;border-bottom:1px solid #2c2c2c;"></div>
<div style="left:5px;top:67px;width:37px;height:12px;background:#363636;border-top:1px solid #444;border-bottom:1px solid #2c2c2c;"></div>
<div style="left:5px;top:79px;width:37px;height:1px;background:#686868;"></div>
<svg style="left:9px;top:69px;" width="8" height="7" viewBox="0 0 8 7"><path d="M0 0.3L3.4 3.3L0 6.3ZM4 0.3L7.4 3.3L4 6.3Z" fill="#cdcdcd"/></svg>
<svg style="left:14px;top:82px;" width="20" height="5" viewBox="0 0 20 5"><path d="M0.5 0V4M2.5 0V4M4.5 0V4M6.5 0V4M8.5 0V4M10.5 0V4M12.5 0V4M14.5 0V4M16.5 0V4M18.5 0V4" stroke="#333" stroke-width="1"/><path d="M0.5 4V5M2.5 4V5M4.5 4V5M6.5 4V5M8.5 4V5M10.5 4V5M12.5 4V5M14.5 4V5M16.5 4V5M18.5 4V5" stroke="#6c6c6c" stroke-width="1"/></svg>
<!-- selected tool bg -->
<div style="left:8px;top:173px;width:31px;height:24px;background:#3a3a3a;border-radius:3px;border:1px solid #333;box-shadow:0 1px 0 #646464;"></div>
<!-- separators -->
<div style="left:9px;top:251px;width:29px;height:1px;background:#3d3d3d;"></div>
<div style="left:9px;top:462px;width:29px;height:1px;background:#3d3d3d;"></div>
<div style="left:9px;top:569px;width:29px;height:1px;background:#3d3d3d;"></div>
<svg id="tools" style="left:0;top:90px;" width="45" height="623" viewBox="0 90 45 623">
  <defs>
    <linearGradient id="ig" x1="0" y1="0" x2="0" y2="1"><stop offset="0" stop-color="#ececec"/><stop offset="1" stop-color="#bdbdbd"/></linearGradient>
    <linearGradient id="igh" x1="0" y1="0" x2="1" y2="0"><stop offset="0" stop-color="#3a3a3a"/><stop offset="1" stop-color="#e6e6e6"/></linearGradient>
    <filter id="sh" x="-20%" y="-20%" width="140%" height="140%"><feDropShadow dx="0" dy="-1" stdDeviation="0.25" flood-color="#1c1c1c" flood-opacity=".75"/></filter>
    <path id="tri" d="M3 0V3H0Z" fill="#b9b9b9"/>
  </defs>
  <g filter="url(#sh)">
  <!-- move -->
  <path d="M15 99L22.3 106L17.8 106.6L15 110Z" fill="#cfcfcf"/>
  <path d="M27.5 103.5L29.5 105.8H28.1V107.9H30.2V106.5L32.5 108.5L30.2 110.5V109.1H28.1V111.2H29.5L27.5 113.5L25.5 111.2H26.9V109.1H24.8V110.5L22.5 108.5L24.8 106.5V107.9H26.9V105.8H25.5Z" fill="#e4e4e4"/>
  <!-- marquee -->
  <path d="M16.5 129V126H19.5M21.5 126H25M27 126H30V129M30 131V134.5M30 136.5V139H27M25 139H21.5M19.5 139H16.5V136.5M16.5 134.5V131" stroke="#e6e6e6" stroke-width="1" fill="none"/>
  <!-- lasso -->
  <ellipse cx="23" cy="156.5" rx="8" ry="5.2" transform="rotate(-9 23 156.5)" stroke="#d6d6d6" stroke-width="1.3" fill="none"/>
  <path d="M16 160.5Q18.8 160 18.8 162Q18.6 163.4 16.8 162.8Q15.4 162 16 160.5M18.8 162Q20.5 164.5 18.5 166.5" stroke="#d6d6d6" stroke-width="1.1" fill="none"/>
  <!-- magic wand -->
  <path d="M23.0 176.1L22.3 180.5L26.7 179.8L23.1 182.4L26.7 185.0L22.3 184.3L23.0 188.7L20.4 185.1L17.8 188.7L18.5 184.3L14.1 185.0L17.7 182.4L14.1 179.8L18.5 180.5L17.8 176.1L20.4 179.7Z" fill="#e4e4e4"/>
  <circle cx="20.4" cy="182.4" r="3.2" fill="#e4e4e4"/>
  <path d="M24 186L30 192" stroke="#d9d9d9" stroke-width="2.1" stroke-linecap="round"/>
  <!-- crop -->
  <path d="M19 202.5V214H30M15 207H26.5V217.5" stroke="#dedede" stroke-width="2" fill="none"/>
  <path d="M30 202.5L20.5 212" stroke="#dedede" stroke-width="1"/>
  <!-- eyedropper -->
  <path d="M16.6 243.4L17.4 241L23.2 235.2L25 237L19.2 242.8Z" fill="none" stroke="#dcdcdc" stroke-width="1.1"/>
  <path d="M22.2 233.4L26.8 238L28.6 236.2L24 231.6Z" fill="#d8d8d8"/>
  <path d="M25.2 232.2L27.6 229.6Q29.4 228.4 30.6 229.6Q31.8 231 30.4 232.6L28 235Z" fill="#d2d2d2"/>
  <!-- healing -->
  <g transform="rotate(-40 25 265.5)"><rect x="15.5" y="262" width="19" height="7.2" rx="3.6" fill="#c4c4c4"/><rect x="21.5" y="262" width="7" height="7.2" fill="#e6e6e6"/>
  <g fill="#555"><circle cx="23.3" cy="264" r=".55"/><circle cx="25" cy="264" r=".55"/><circle cx="26.7" cy="264" r=".55"/><circle cx="23.3" cy="267.2" r=".55"/><circle cx="25" cy="267.2" r=".55"/><circle cx="26.7" cy="267.2" r=".55"/><circle cx="18.5" cy="265.6" r=".5"/><circle cx="31.5" cy="265.6" r=".5"/></g></g>
  <path d="M16.5 271Q12.5 265 15.5 260Q18.5 256.5 22 260.5" stroke="#ececec" stroke-width="1.2" stroke-dasharray="1 1.1" fill="none"/>
  <!-- brush -->
  <path d="M31.6 284.6L23 295" stroke="#d2d2d2" stroke-width="2.2" stroke-linecap="round"/>
  <path d="M14 298.2Q18 297.6 19.6 294.2Q21.4 293.2 22.8 295.2Q23.4 298.4 20.4 299.6Q17 300.4 14 298.2Z" fill="#dcdcdc"/>
  <!-- stamp -->
  <circle cx="22.5" cy="312.6" r="3.5" fill="url(#ig)"/>
  <path d="M21 314.5H24V320H30V324.5H15V320H21Z" fill="url(#ig)"/>
  <rect x="15.8" y="325.3" width="13.4" height="1.2" fill="#e0e0e0"/>
  <!-- history brush -->
  <path d="M30.8 338.4L23.4 347.4" stroke="#d8d8d8" stroke-width="2" stroke-linecap="round"/>
  <path d="M15 349.6Q18.6 349 20 346.2Q21.8 345.2 23.2 347.2Q23.8 350 21 351Q18 351.8 15 349.6Z" fill="#d8d8d8"/>
  <path d="M15.6 340.2L19 336.6V338.4Q24 336.4 26.4 339L25.4 340Q22.6 338.6 19 340.2V341.4Z" fill="#d8d8d8"/>
  <path d="M29.4 341.6L26.4 349.6" stroke="#f2f2f2" stroke-width="1.2" stroke-dasharray="1 1" fill="none"/>
  <!-- eraser -->
  <path d="M23.4 363H31L32 364.2L31.4 367.6L23.4 375.8H16.4L16 374.6L16.8 371L18.4 369Z" fill="#d4d4d4"/>
  <path d="M23.4 363H31L24.6 369.4H18.2Z" fill="#ebebeb"/>
  <path d="M24.6 369.6L31.6 364.4L31.2 367.6L24 375.4Z" fill="#bcbcbc"/>
  <!-- gradient -->
  <rect x="15.5" y="390.5" width="15" height="11" fill="url(#igh)" stroke="#efefef" stroke-width="1"/>
  <!-- blur -->
  <path d="M22.4 414.2Q25.6 419.6 27.4 422.4Q29 426.4 25.6 428.4Q22.4 429.8 19.2 428.4Q16 426.4 17.6 422.4Q19.4 419.6 22.4 414.2Z" fill="url(#ig)"/>
  <!-- dodge -->
  <circle cx="21" cy="446" r="5.2" fill="url(#ig)"/>
  <path d="M24.4 449.6L29.6 454.4" stroke="#dcdcdc" stroke-width="1.8" stroke-linecap="round"/>
  <!-- pen -->
  <path d="M15 484.8L18.4 474L25 469.6L30 474.6L25.8 481.4Z" fill="#d6d6d6"/>
  <path d="M25.6 468.6L27 467.2L32.4 472.6L31 474Z" fill="#e8e8e8"/>
  <path d="M15.4 484.4L21.6 478.2" stroke="#3a3a3a" stroke-width="1"/><circle cx="22.2" cy="477.6" r="1.1" fill="#333"/>
  <!-- hexagon -->
  <path d="M15.2 554.7L18.8 548.5H26.4L30 554.7L26.4 561H18.8Z" fill="#8e8e8e" stroke="#e8e8e8" stroke-width="1"/>
  <!-- path select -->
  <path d="M18.2 521.2L27.8 530.6L24.4 531L26.4 535.6L23.8 536.8L21.8 532.2L18.2 534.6Z" fill="#2e2e2e" stroke="#e6e6e6" stroke-width="1"/>
  <!-- hand -->
  <path d="M19.6 592L14.8 584.4Q14.4 583 16 583.4L19 586.4L18 578.2Q18.2 576.6 19.6 577L20.8 583.4L21.8 576Q22.8 574.8 24 576L24 583.4L25.6 577.2Q26.8 576.2 27.8 577.6L27 584.4L29.4 580.4Q30.8 579.6 31 581.2L28.4 589L28 592Z" fill="url(#ig)"/>
  <!-- zoom -->
  <circle cx="21.4" cy="607.2" r="5" fill="#8c8c8c" stroke="#dcdcdc" stroke-width="1.4"/>
  <path d="M25.4 611.4L30.4 616.6" stroke="#d6d6d6" stroke-width="2.4" stroke-linecap="round"/>
  <!-- default colors -->
  <rect x="12" y="630" width="6" height="6" fill="#d0d0d0"/>
  <rect x="8.5" y="626.5" width="6" height="6" fill="#3c3c3c" stroke="#e0e0e0" stroke-width="1"/>
  <!-- swap -->
  <path d="M26.2 627L29.4 624V626.2Q33.6 626 33.8 630.4H35.8L33 634.6L30.2 630.4H32Q31.8 628 29.4 628V630Z" fill="#d8d8d8"/>
  <!-- type -->
  <text x="22.8" y="509" font-family="'Liberation Serif',serif" font-size="19.5" fill="#dedede" text-anchor="middle">T</text>
  </g>
  <!-- corner triangles -->
  <use href="#tri" x="33" y="138.6"/><use href="#tri" x="33" y="165"/><use href="#tri" x="33" y="191.2"/>
  <use href="#tri" x="33" y="217"/><use href="#tri" x="33" y="243"/><use href="#tri" x="33" y="272.4"/>
  <use href="#tri" x="33" y="298.6"/><use href="#tri" x="33" y="324"/><use href="#tri" x="33" y="350"/>
  <use href="#tri" x="33" y="376"/><use href="#tri" x="33" y="402"/><use href="#tri" x="33" y="428"/>
  <use href="#tri" x="33" y="454"/><use href="#tri" x="33" y="483.4"/><use href="#tri" x="33" y="509"/>
  <use href="#tri" x="33" y="535"/><use href="#tri" x="33" y="561"/><use href="#tri" x="33" y="590"/>
  <!-- fg/bg -->
  <rect x="18.5" y="651.5" width="19" height="19" fill="#fff" stroke="#2e2e2e" stroke-width="1"/>
  <rect x="8.5" y="641.5" width="19" height="19" fill="#fff" stroke="#2e2e2e" stroke-width="1"/>
  <rect x="10" y="643" width="16" height="16" fill="#00adfe"/>
  <!-- quick mask -->
  <rect x="14.5" y="680.5" width="16" height="12" fill="#3a3a3a" stroke="#dcdcdc" stroke-width="1"/>
  <circle cx="22.5" cy="686.5" r="3.8" fill="none" stroke="#ededed" stroke-width="1.1" stroke-dasharray="1 1.2"/>
  <path d="M14 679.5H31" stroke="#2a2a2a" stroke-width="1"/>
  <!-- screen mode -->
  <rect x="19" y="706" width="12" height="2.6" fill="#dcdcdc"/>
  <path d="M14 706.5H19M19 705.5H31" stroke="#2a2a2a" stroke-width="1"/>
</svg>
<!-- right dock -->
<div style="left:731px;top:67px;width:283px;height:643px;background:#2d2d2d;"></div>
<div style="left:733px;top:67px;width:280px;height:11px;background:linear-gradient(#3c3c3c,#343434);border-top:1px solid #454545;"></div>
<svg style="left:759px;top:69px;" width="8" height="7" viewBox="0 0 8 7"><path d="M3.4 0.3L0 3.3L3.4 6.3ZM7.4 0.3L4 3.3L7.4 6.3Z" fill="#cdcdcd"/></svg>
<svg style="left:1002px;top:69px;" width="8" height="7" viewBox="0 0 8 7"><path d="M0 0.3L3.4 3.3L0 6.3ZM4 0.3L7.4 3.3L4 6.3Z" fill="#cdcdcd"/></svg>
<!-- icon column -->
<div style="left:733px;top:79px;width:37px;height:630px;background:#535353;"></div>
<div style="left:733px;top:79px;width:37px;height:41px;border-top:1px solid #646464;border-bottom:1px solid #2c2c2c;"></div>
<div style="left:733px;top:119px;width:37px;height:42px;border-top:1px solid #2c2c2c;box-shadow:inset 0 1px 0 #646464;border-bottom:1px solid #2c2c2c;"></div>
<div style="left:733px;top:160px;width:37px;height:42px;border-top:1px solid #2c2c2c;box-shadow:inset 0 1px 0 #646464;border-bottom:1px solid #2c2c2c;"></div>
<div style="left:733px;top:202px;width:37px;height:1px;background:#646464;"></div>
<svg id="dockicons" style="left:733px;top:79px;" width="38" height="125" viewBox="733 79 38 125">
  <defs><linearGradient id="kug" x1="0" y1="0" x2="0" y2="1"><stop offset="0" stop-color="#c6c6c6"/><stop offset="1" stop-color="#9c9c9c"/></linearGradient><path id="grip" d="M0.5 0V4M2.5 0V4M4.5 0V4M6.5 0V4M8.5 0V4M10.5 0V4M12.5 0V4M14.5 0V4M16.5 0V4M18.5 0V4" stroke="#333" stroke-width="1"/>
  <path id="grip2" d="M0.5 4V5M2.5 4V5M4.5 4V5M6.5 4V5M8.5 4V5M10.5 4V5M12.5 4V5M14.5 4V5M16.5 4V5M18.5 4V5" stroke="#6c6c6c" stroke-width="1"/></defs>
  <use href="#grip" x="742" y="82"/><use href="#grip2" x="742" y="82"/>
  <use href="#grip" x="742" y="123"/><use href="#grip2" x="742" y="123"/>
  <use href="#grip" x="742" y="164"/><use href="#grip2" x="742" y="164"/>
  <!-- history icon -->
  <g filter="url(#sh)">
  <rect x="746.5" y="94.5" width="4" height="4" fill="#666" stroke="#dcdcdc" stroke-width="1"/>
  <rect x="746.5" y="100.5" width="4" height="4" fill="#666" stroke="#dcdcdc" stroke-width="1"/>
  <rect x="746" y="106" width="5" height="5" fill="#c8c8c8"/>
  <path d="M753.6 97.4L757.4 94.6V96.4Q761.2 97.8 760 103.6Q758.8 107.8 754.4 109.8Q758.6 106 758.2 101.6Q758 99.2 757.4 98.8V100.6Z" fill="#d6d6d6"/>
  <!-- 3d icon -->
  <path d="M749.5 134.8L754 136.8V142.4L749.5 145L745 142.4V136.8Z" fill="#8a8a8a" stroke="#dadada" stroke-width="1"/>
  <path d="M745.2 137L749.5 139.2L753.8 137M749.5 139.2V144.8" stroke="#e0e0e0" stroke-width=".9" fill="none"/>
  <rect x="756" y="135" width="4.4" height="4" fill="#d4d4d4"/><rect x="756" y="140.4" width="4.4" height="4" fill="#d4d4d4"/>
  <rect x="745" y="147.2" width="15.4" height="4" fill="#d8d8d8"/>
  <path d="M756 148.2H760L758 150.4Z" fill="#222"/>
  </g>
  <!-- ku icon -->
  <path d="M743.8 184.4Q743.4 175.4 752.4 175.4Q761.6 175.6 761.2 185Q760.8 194 752 193.8Q743.6 193.6 743.8 184.4Z" fill="url(#kug)" filter="url(#sh)"/>
  <text x="752.3" y="188.6" font-size="11" font-weight="bold" font-family="'Liberation Sans',sans-serif" fill="#3c3c3c" text-anchor="middle">ku</text>
</svg>
<!-- panels column -->
<div style="left:773px;top:79px;width:240px;height:630px;background:#535353;"></div>
<!-- COLOR PANEL -->
<div class="tabrow" style="left:773px;top:79px;width:240px;height:17px;"></div>
<div class="tabhl" style="left:810px;top:96px;width:203px;"></div>
<div class="tabA" style="left:773px;top:79px;width:37px;height:18px;"></div>
<div class="tabI" style="left:810px;top:80px;width:36px;height:15px;"></div>
<span class="t tt" style="left:781px;top:80px;">颜色</span>
<span class="t tt ti" style="left:817px;top:80px;">色板</span>
<svg class="pmenu" style="left:995px;top:83px;" width="15" height="9" viewBox="0 0 15 9"><path d="M0 2.5H5L2.5 5.5Z" fill="#ddd"/><path d="M6 1H15M6 3.5H15M6 6H15M6 8.5H15" stroke="#ddd" stroke-width="1"/></svg>
<!-- swatches -->
<div style="left:777px;top:106px;width:22px;height:22px;border:1px solid #7a7a7a;"></div>
<div style="left:788px;top:117px;width:20px;height:20px;background:#fff;border:1px solid #2a2a2a;"></div>
<div style="left:778px;top:107px;width:20px;height:20px;background:#fff;border:1px solid #1e1e1e;"></div>
<div style="left:780px;top:109px;width:16px;height:16px;background:#00adfe;"></div>
<span class="t" style="left:816px;top:107px;">R</span>
<span class="t" style="left:816px;top:132px;">G</span>
<span class="t" style="left:816px;top:157px;">B</span>
<div class="sl" style="left:832px;top:109px;background:linear-gradient(90deg,#00adfe,#68acfe 50%,#ffadfe);"></div>
<div class="sl" style="left:832px;top:134px;background:linear-gradient(90deg,#0000fe,#0080fe 50%,#00fffe);"></div>
<div class="sl" style="left:832px;top:159px;background:linear-gradient(90deg,#00ad00,#00ad80 50%,#00adfe);"></div>
<svg style="left:827px;top:115px;" width="11" height="10" viewBox="0 0 11 10"><defs><linearGradient id="thg" x1="0" y1="0" x2="0" y2="1"><stop offset="0" stop-color="#c8c8c8"/><stop offset="1" stop-color="#7c7c7c"/></linearGradient></defs><path id="thumb" d="M5.5 0.6L10.2 5.2V8.4Q10.2 9.6 9 9.6H2Q0.8 9.6 0.8 8.4V5.2Z" fill="url(#thg)" stroke="#3a3a3a" stroke-width=".9"/></svg>
<svg style="left:902px;top:140px;" width="11" height="10" viewBox="0 0 11 10"><use href="#thumb"/></svg>
<svg style="left:938px;top:165px;" width="11" height="10" viewBox="0 0 11 10"><use href="#thumb"/></svg>
<div class="vb" style="left:950px;top:107px;"></div><span class="t vt" style="left:953px;top:109px;">0</span>
<div class="vb" style="left:950px;top:132px;"></div><span class="t vt" style="left:953px;top:134px;">173</span>
<div class="vb" style="left:950px;top:157px;"></div><span class="t vt" style="left:953px;top:159px;">254</span>
<!-- warning + swatch -->
<svg style="left:783px;top:160px;" width="14" height="14" viewBox="0 0 14 14"><path d="M7 1.2L13 12.8H1Z" fill="#dcdcdc"/><path d="M6.3 5.2H7.7V9.4H6.3ZM6.3 10.2H7.7V11.6H6.3Z" fill="#1a1a1a"/></svg>
<div style="left:799px;top:161px;width:14px;height:14px;background:#fff;border:1px solid #1e1e1e;"></div>
<div style="left:801px;top:163px;width:10px;height:10px;background:#3a9cdc;"></div>
<!-- spectrum -->
<div style="left:778px;top:187px;width:209px;height:15px;background:linear-gradient(90deg,#ff0000 0%,#ffff00 16%,#00a651 33%,#00aeef 52%,#2e3192 66%,#ec008c 83%,#ff0000 100%);"></div>
<div style="left:778px;top:187px;width:209px;height:15px;background:linear-gradient(180deg,rgba(255,255,255,1) 0%,rgba(255,255,255,0) 50%,rgba(0,0,0,0) 50%,rgba(0,0,0,1) 100%);"></div>
<div style="left:987px;top:187px;width:8px;height:8px;background:#fff;"></div>
<div style="left:987px;top:195px;width:8px;height:7px;background:#000;"></div>
<div class="pgap" style="left:773px;top:208px;"></div>
<!-- ADJUSTMENTS PANEL -->
<div class="tabrow" style="left:773px;top:211px;width:240px;height:17px;"></div>
<div class="tabhl" style="left:811px;top:228px;width:202px;"></div>
<div class="tabA" style="left:773px;top:211px;width:38px;height:18px;"></div>
<div class="tabI" style="left:811px;top:212px;width:37px;height:15px;"></div>
<span class="t tt" style="left:781px;top:212px;">调整</span>
<span class="t tt ti" style="left:818px;top:212px;">样式</span>
<svg class="pmenu" style="left:995px;top:215px;" width="15" height="9" viewBox="0 0 15 9"><path d="M0 2.5H5L2.5 5.5Z" fill="#ddd"/><path d="M6 1H15M6 3.5H15M6 6H15M6 8.5H15" stroke="#ddd" stroke-width="1"/></svg>
<span class="t" style="left:782px;top:233px;color:#f0f0f0;">添加调整</span>
<svg id="adjicons" style="left:805px;top:255px;" width="150" height="80" viewBox="805 255 150 80">
  <defs>
    <linearGradient id="ag" x1="0" y1="0" x2="0" y2="1"><stop offset="0" stop-color="#e6e6e6"/><stop offset="1" stop-color="#b4b4b4"/></linearGradient>
    <linearGradient id="agd" x1="0" y1="0" x2="0" y2="1"><stop offset="0" stop-color="#dcdcdc"/><stop offset="1" stop-color="#4a4a4a"/></linearGradient>
    <linearGradient id="agh" x1="0" y1="0" x2="1" y2="0"><stop offset="0" stop-color="#4a4a4a"/><stop offset="1" stop-color="#d0d0d0"/></linearGradient>
    <linearGradient id="agx" x1="0" y1="0" x2="1" y2="1"><stop offset="0" stop-color="#5a5a5a"/><stop offset=".35" stop-color="#bdbdbd"/><stop offset=".55" stop-color="#6a6a6a"/><stop offset=".8" stop-color="#c6c6c6"/><stop offset="1" stop-color="#5a5a5a"/></linearGradient>
    <radialGradient id="agr" cx=".5" cy=".35" r=".5"><stop offset="0" stop-color="#5a5a5a"/><stop offset="1" stop-color="#d8d8d8"/></radialGradient>
  </defs>
  <g filter="url(#sh)">
  <!-- row1 -->
  <circle cx="829.2" cy="266.6" r="3.6" fill="#535353" stroke="#e0e0e0" stroke-width="1.1"/>
  <path d="M829.2 263A3.6 3.6 0 0 1 829.2 270.2Z" fill="#e0e0e0"/>
  <path d="M829.2 258.4V260.8M829.2 272.4V274.8M821 266.6H823.4M835 266.6H837.4M823.4 260.8L825 262.4M833.4 270.8L835 272.4M835 260.8L833.4 262.4M825 270.8L823.4 272.4" stroke="#e0e0e0" stroke-width="1.4"/>
  <path d="M845 271V263L846.4 265L847.6 261.6L849 264.4L850.6 260L852 264.4L853.6 259.6L855.2 264.4L856.6 260.6L858 264.6L859.4 262L860.8 265L862 263L863.4 265.4V271Z" fill="url(#ag)"/>
  <rect x="870.5" y="260.5" width="15" height="12" fill="#727272" stroke="#dedede" stroke-width="1"/>
  <path d="M870.5 264.5H885.5M870.5 268.5H885.5M875.5 260.5V272.5M880.5 260.5V272.5" stroke="#cfcfcf" stroke-width=".8"/>
  <path d="M871 272Q877 272 878 266.4Q879 261 885 261" stroke="#f4f4f4" stroke-width="1.3" fill="none"/>
  <rect x="894.5" y="260.5" width="15" height="12" fill="#d8d8d8" stroke="#dedede" stroke-width="1"/>
  <path d="M909 261V272H895Z" fill="#5c5c5c"/>
  <path d="M896.4 264H900.4M898.4 262V266" stroke="#333" stroke-width="1"/><path d="M903.6 269.4H907.4" stroke="#eee" stroke-width="1"/>
  <path d="M918 259.6H934L926 273.8Z" fill="url(#agr)" stroke="#d6d6d6" stroke-width="1"/>
  <!-- row2 -->
  <rect x="810.5" y="287.5" width="15" height="12" fill="#8c8c8c" stroke="#dedede" stroke-width="1"/>
  <rect x="811" y="288" width="14" height="5" fill="#bdbdbd"/><path d="M813.5 288V293M817 288V293M821.6 288V293" stroke="#7a7a7a" stroke-width="1.6"/>
  <rect x="811" y="294" width="14" height="5" fill="url(#agh)"/><path d="M811 293.5H825" stroke="#e6e6e6" stroke-width="1"/>
  <path d="M834.6 289.4H848.4M841.5 286.4V289.4M837 289.6L834 296.6H840ZM846 289.6L843 296.6H849Z" stroke="#dcdcdc" stroke-width="1.1" fill="none"/>
  <path d="M833.6 296.6H840.4Q840 299.4 837 299.4Q834 299.4 833.6 296.6ZM842.6 296.6H849.4Q849 299.4 846 299.4Q843 299.4 842.6 296.6Z" fill="#d8d8d8"/>
  <path d="M839.6 286H843.4V288.4L841.5 290.2L839.6 288.4Z" fill="#e2e2e2"/>
  <rect x="858.5" y="287.5" width="15" height="12" fill="url(#ag)" stroke="#dedede" stroke-width="1"/><rect x="859.6" y="288.6" width="6.2" height="9.8" fill="#333"/>
  <path d="M881 288.4H884L885 286.8H890L891 288.4H894.6V295.4H881Z" fill="#cdcdcd"/>
  <circle cx="887.6" cy="291.8" r="2.6" fill="#8a8a8a" stroke="#555" stroke-width=".8"/>
  <circle cx="893" cy="296" r="4.4" fill="#9a9a9a" stroke="#dcdcdc" stroke-width="1"/>
  <circle cx="913.4" cy="290.6" r="4.4" fill="#dedede"/><circle cx="909.6" cy="296.2" r="4.4" fill="#c8c8c8"/><circle cx="917.4" cy="296.2" r="4.4" fill="#d2d2d2"/>
  <path d="M910.6 292.8Q913.4 294.6 916.2 292.8Q915.8 296.4 913.4 297.8Q911 296.4 910.6 292.8Z" fill="#3c3c3c"/>
  <rect x="930.5" y="287.5" width="15" height="12" fill="#6c6c6c" stroke="#dedede" stroke-width="1"/>
  <path d="M930.5 291.5H945.5M930.5 295.5H945.5M935.5 287.5V299.5M940.5 287.5V299.5" stroke="#dedede" stroke-width="1"/>
  <rect x="936" y="288" width="4" height="3" fill="#9c9c9c"/><rect x="941" y="296" width="4" height="3" fill="#3e3e3e"/><rect x="931" y="292" width="4" height="3" fill="#8a8a8a"/>
  <!-- row3 -->
  <rect x="822.5" y="314.5" width="15" height="12" fill="#5a5a5a" stroke="#dedede" stroke-width="1"/>
  <path d="M823 326V315H837Z" fill="#dadada"/><ellipse cx="830" cy="320.5" rx="4.2" ry="3" transform="rotate(-35 830 320.5)" fill="#3c3c3c"/><path d="M826.6 323L833.4 318" stroke="#dadada" stroke-width=".8"/>
  <rect x="846.5" y="314.5" width="15" height="12" fill="url(#agx)" stroke="#dedede" stroke-width="1"/>
  <rect x="870.5" y="314.5" width="15" height="12" fill="#d6d6d6" stroke="#dedede" stroke-width="1"/>
  <path d="M872 323.6H874.6V321.4H877.6V319.4H880.6V317.4H884V319.6H881.6V321.6H878.6V323.6H875.6V325H872Z" fill="#2e2e2e"/>
  <rect x="894.5" y="314.5" width="15" height="12" fill="#787878" stroke="#dedede" stroke-width="1"/>
  <path d="M895 315L902 320.5L895 326ZM909 315L902 320.5L909 326Z" fill="#d4d4d4"/>
  <rect x="918.5" y="314.5" width="15" height="12" fill="url(#agh)" stroke="#dedede" stroke-width="1"/>
  </g>
</svg>
<div class="pgap" style="left:773px;top:340px;"></div>
<!-- LAYERS PANEL -->
<div class="tabrow" style="left:773px;top:343px;width:240px;height:17px;"></div>
<div class="tabhl" style="left:811px;top:360px;width:202px;"></div>
<div class="tabA" style="left:773px;top:343px;width:38px;height:18px;"></div>
<div class="tabI" style="left:811px;top:344px;width:37px;height:15px;"></div>
<div class="tabI" style="left:849px;top:344px;width:37px;height:15px;"></div>
<span class="t tt" style="left:781px;top:344px;">图层</span>
<span class="t tt ti" style="left:818px;top:344px;">通道</span>
<span class="t tt ti" style="left:856px;top:344px;">路径</span>
<svg class="pmenu" style="left:995px;top:347px;" width="15" height="9" viewBox="0 0 15 9"><path d="M0 2.5H5L2.5 5.5Z" fill="#ddd"/><path d="M6 1H15M6 3.5H15M6 6H15M6 8.5H15" stroke="#ddd" stroke-width="1"/></svg>
<!-- filter row -->
<div class="sel" style="left:778px;top:364px;width:70px;height:20px;"></div>
<svg style="left:784px;top:367px;" width="13" height="13" viewBox="0 0 13 13"><circle cx="7.6" cy="5.2" r="3.6" fill="none" stroke="#dcdcdc" stroke-width="1.5"/><path d="M5 8L1.6 11.4" stroke="#dcdcdc" stroke-width="2" stroke-linecap="round"/></svg>
<span class="t" style="left:800px;top:366px;color:#f2f2f2;">类型</span>
<svg style="left:837px;top:368px;" width="7" height="11" viewBox="0 0 7 11"><path d="M0.5 4.5L3.5 1L6.5 4.5ZM0.5 6.5L3.5 10L6.5 6.5Z" fill="#e8e8e8"/></svg>
<svg id="filt" style="left:865px;top:362px;" width="148" height="24" viewBox="865 362 148 24">
  <g filter="url(#sh)" transform="translate(0,0.9)">
  <rect x="869.5" y="367.5" width="12" height="10" fill="#5e5e5e" stroke="#dcdcdc" stroke-width="1"/>
  <path d="M871 376L874 372L876 374L878 371.6L880.4 376Z" fill="#d8d8d8"/><circle cx="878.6" cy="370" r="1" fill="#e6e6e6"/>
  <circle cx="899.1" cy="372.2" r="4.7" fill="#5e5e5e" stroke="#d0d0d0" stroke-width="1.3"/><path d="M895.6 375.7A5 5 0 0 1 902.6 368.7Z" fill="#d6d6d6"/>
  <rect x="943" y="368.5" width="9" height="9" fill="none" stroke="#dcdcdc" stroke-width="1.2"/>
  <g fill="#535353" stroke="#e8e8e8" stroke-width=".9"><rect x="941.9" y="367.4" width="2.3" height="2.3"/><rect x="950.8" y="367.4" width="2.3" height="2.3"/><rect x="941.9" y="376.3" width="2.3" height="2.3"/><rect x="950.8" y="376.3" width="2.3" height="2.3"/></g>
  <path d="M969.5 367.5H974L976.5 370V377.5H969.5Z" fill="#5e5e5e" stroke="#dcdcdc" stroke-width="1"/>
  <rect x="966" y="373" width="5.6" height="5.6" fill="#d0d0d0"/>
  <text x="923" y="377.6" font-family="'Liberation Serif',serif" font-weight="bold" font-size="14" fill="#d8d8d8" text-anchor="middle">T</text>
  </g>
  <rect x="1000.5" y="365.5" width="8" height="16" fill="#3c3c3c" stroke="#4a4a4a" stroke-width="1"/>
  <rect x="1001" y="366" width="7" height="7" fill="#8a8a8a"/>
</svg>
<div class="hsep" style="left:773px;top:387px;"></div>
<!-- blend row -->
<div class="sel" style="left:778px;top:392px;width:110px;height:20px;"></div>
<span class="t" style="left:786px;top:394px;color:#f2f2f2;">正常</span>
<svg style="left:876px;top:396px;" width="7" height="11" viewBox="0 0 7 11"><path d="M0.5 4.5L3.5 1L6.5 4.5ZM0.5 6.5L3.5 10L6.5 6.5Z" fill="#e8e8e8"/></svg>
<span class="t" style="left:896px;top:394px;color:#f2f2f2;">不透明度:</span>
<div class="pin" style="left:953px;top:392px;"></div><span class="t" style="left:956.5px;top:394px;font-size:11px;letter-spacing:0;color:#f4f4f4;">100%</span>
<div class="pbtn" style="left:988px;top:392px;"></div>
<svg style="left:995px;top:400px;" width="7" height="4" viewBox="0 0 7 4"><path d="M0 0H7L3.5 4Z" fill="#e8e8e8"/></svg>
<div class="hsep" style="left:773px;top:415px;"></div>
<!-- lock row -->
<span class="t" style="left:780px;top:421px;color:#f2f2f2;">锁定:</span>
<svg id="locks" style="left:815px;top:420px;" width="85" height="20" viewBox="815 420 85 20">
  <g filter="url(#sh)">
  <rect x="817" y="424.6" width="11.4" height="11.4" fill="#d6d6d6"/>
  <g fill="#8a8a8a"><rect x="818.2" y="425.8" width="3" height="3"/><rect x="824.2" y="425.8" width="3" height="3"/><rect x="821.2" y="428.8" width="3" height="3"/><rect x="818.2" y="431.8" width="3" height="3"/><rect x="824.2" y="431.8" width="3" height="3"/></g>
  <path d="M852.4 423.6L845.6 431.4" stroke="#d8d8d8" stroke-width="2" stroke-linecap="round"/>
  <path d="M837 434.6Q840.6 434 842 431Q844 430 845.4 432Q846 435 843 436Q840 436.8 837 434.6Z" fill="#d8d8d8"/>
  <path d="M866.5 423L869.2 426H867.4V428.6H870V426.8L873 429.5L870 432.2V430.4H867.4V433H869.2L866.5 436L863.8 433H865.6V430.4H863V432.2L860 429.5L863 426.8V428.6H865.6V426H863.8Z" fill="#dcdcdc"/>
  <rect x="884" y="428.6" width="10" height="7.4" rx="1" fill="#d4d4d4"/>
  <path d="M886 428.6V426.6Q886 423.8 889 423.8Q892 423.8 892 426.6V428.6" stroke="#d4d4d4" stroke-width="1.6" fill="none"/>
  <rect x="888.3" y="430.6" width="1.4" height="3" fill="#444"/>
  </g>
</svg>
<span class="t" style="left:920px;top:421px;color:#f2f2f2;">填充:</span>
<div class="pin" style="left:953px;top:420px;"></div><span class="t" style="left:956.5px;top:422px;font-size:11px;letter-spacing:0;color:#f4f4f4;">100%</span>
<div class="pbtn" style="left:988px;top:420px;"></div>
<svg style="left:995px;top:428px;" width="7" height="4" viewBox="0 0 7 4"><path d="M0 0H7L3.5 4Z" fill="#e8e8e8"/></svg>
<!-- layer list -->
<div style="left:773px;top:445px;width:240px;height:244px;background:#474747;border-top:1px solid #3a3a3a;"></div>
<div style="left:998px;top:446px;width:15px;height:243px;background:#424242;"></div>
<div style="left:773px;top:446px;width:225px;height:27px;background:#4d4d4d;border-bottom:1px solid #3a3a3a;"></div>
<div style="left:773px;top:473px;width:225px;height:27px;background:#4d4d4d;border-bottom:1px solid #3a3a3a;"></div>
<div style="left:804px;top:446px;width:194px;height:26px;background:#6a7c99;"></div>
<div style="left:803px;top:446px;width:1px;height:54px;background:#3e3e3e;"></div>
<svg id="lay" style="left:773px;top:446px;" width="225" height="54" viewBox="773 446 225 54">
  <defs>
    <g id="eye"><path d="M0 4.8Q6 -2.8 12 4.8Q6 11.6 0 4.8Z" fill="#c4c4c4"/><circle cx="6" cy="4.6" r="2.9" fill="#3a3a3a"/><circle cx="6.9" cy="3.6" r="1" fill="#e8e8e8"/></g>
    <linearGradient id="tsky" x1="0" y1="0" x2="0" y2="1"><stop offset="0" stop-color="#e8e7f4"/><stop offset="1" stop-color="#d8dae9"/></linearGradient>
    <g id="thumb2">
      <rect x="0" y="0" width="32" height="20" fill="#0a0a0e"/>
      <rect x="1" y="1" width="30" height="18" fill="#15122c"/>
      <rect x="1" y="1" width="30" height="6.2" fill="url(#tsky)"/>
      <rect x="1" y="7" width="30" height="1.2" fill="#2e2638"/>
      <rect x="1" y="8.2" width="30" height="1.6" fill="#45353f"/>
      <rect x="1" y="9.8" width="30" height="1" fill="#241d30"/>
      <path d="M7.6 19L11.6 15.2L12.4 13L14.6 12L16.4 12.6L16.2 14.6L14.8 15.8L13.4 19Z" fill="#c09a98"/>
      <path d="M15.6 12.4L15.4 8.6" stroke="#8e6254" stroke-width=".9"/><circle cx="14.6" cy="7.8" r="1.1" fill="#a07468"/><circle cx="16.4" cy="8.4" r=".9" fill="#a07468"/>
    </g>
  </defs>
  <use href="#eye" x="782" y="454.4"/><use href="#eye" x="782" y="481.4"/>
  <use href="#thumb2" x="807" y="449"/><use href="#thumb2" x="807" y="476"/>
  <path d="M826.6 485L832.4 492" stroke="#cfcbc8" stroke-width="1.3"/>
  <path d="M805.5 452V447.5H816M830 447.5H840.5V452M840.5 467V471.5H830M816 471.5H805.5V467" stroke="#f4f4f4" stroke-width="1" fill="none"/>
  <rect x="971.5" y="484.5" width="9" height="7" rx="1" fill="#5a5a5a" stroke="#d0d0d0" stroke-width="1"/>
  <path d="M973.4 484.4V483Q973.4 480.4 976 480.4Q978.6 480.4 978.6 483V484.4" stroke="#d0d0d0" stroke-width="1.2" fill="none"/>
  <rect x="975.4" y="486.6" width="1.2" height="3" fill="#d8d8d8"/>
</svg>
<span class="t" style="left:848px;top:452px;color:#fff;">图层 1</span>
<span class="t" style="left:850px;top:479px;font-size:11.5px;color:#f2f2f2;font-style:italic;transform:skewX(-12deg);">背景</span>
<!-- bottom bar -->
<div style="left:773px;top:689px;width:240px;height:20px;background:#535353;border-top:1px solid #333;box-shadow:inset 0 1px 0 #5e5e5e;"></div>
<svg id="lbot" style="left:805px;top:690px;" width="190" height="19" viewBox="805 690 190 19">
  <g filter="url(#sh)">
  <rect x="811" y="696.6" width="12.4" height="6.6" rx="3.3" fill="none" stroke="#a6a6a6" stroke-width="1.9"/>
  <path d="M814.6 699.9H819.8" stroke="#a6a6a6" stroke-width="1.9" stroke-linecap="round"/>
  <rect x="864.6" y="695.4" width="13.6" height="10" fill="#d2d2d2"/><circle cx="871.4" cy="700.4" r="2.6" fill="#444"/>
  <circle cx="898" cy="699.6" r="5" fill="#5a5a5a" stroke="#d4d4d4" stroke-width="1.3"/><path d="M894.2 703.4A5.4 5.4 0 0 1 901.8 695.8Z" fill="#dadada"/>
  <path d="M919 695.2H924L925.4 696.8H931V705.2H919Z" fill="#d4d4d4"/>
  <path d="M946.6 695.2H957V705.2H950.8V699.2H946.6Z" fill="#d6d6d6"/><path d="M946.8 700.4H949.6V703.8Z" fill="#d6d6d6"/>
  <path d="M973 697.4H984M976.4 697.2Q976.4 695.2 978.5 695.2Q980.6 695.2 980.6 697.2" stroke="#d0d0d0" stroke-width="1.2" fill="none"/>
  <path d="M974.4 699.2H982.6L981.8 706.2H975.2Z" fill="none" stroke="#d0d0d0" stroke-width="1.1"/>
  <path d="M977 699.8V705.4M978.6 699.8V705.4M980.2 699.8V705.4" stroke="#d0d0d0" stroke-width=".8"/>
  </g>
  <text x="838.4" y="704.4" font-family="'Liberation Serif',serif" font-style="italic" font-size="15" fill="#cfcfcf" letter-spacing="-.8">fx</text>
  <path d="M852 704.6H856L854 706.6Z" fill="#d8d8d8"/>
  <path d="M906 704.6H910L908 706.6Z" fill="#d8d8d8"/>
</svg>

</div>
</body>
</html>
